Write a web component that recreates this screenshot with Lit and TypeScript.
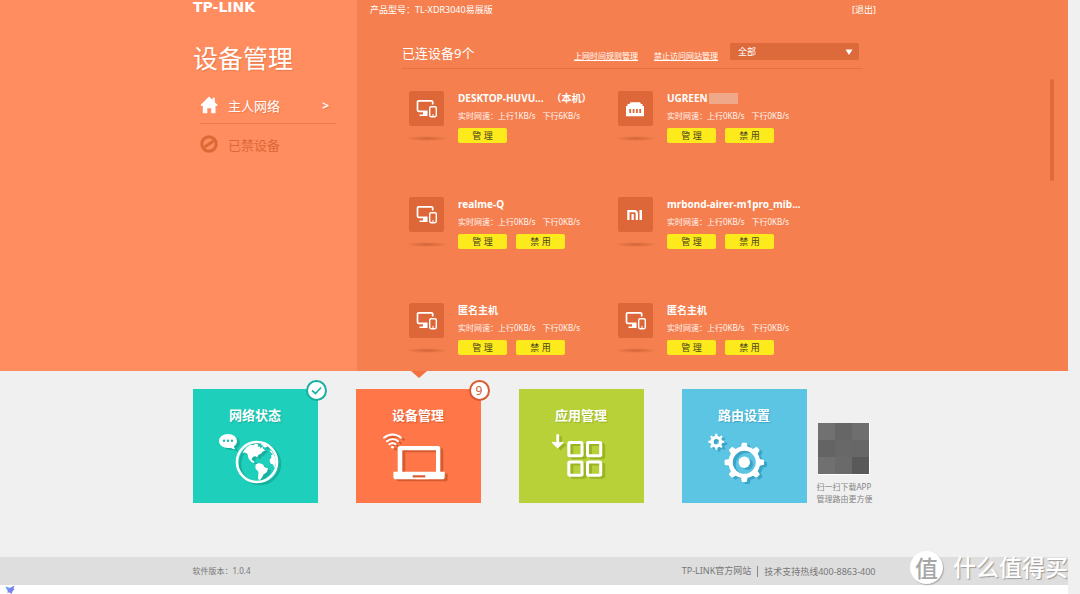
import { LitElement, html, svg, css, type TemplateResult } from "lit";
import { customElement, property } from "lit/decorators.js";

type Kind = "multi" | "ethernet" | "mi";

interface Device {
  name: string;
  kind: Kind;
  up: string;
  down: string;
  self?: boolean;
  masked?: boolean;
}

const devices: Device[] = [
  { name: "DESKTOP-HUVU...", kind: "multi", up: "1KB/s", down: "6KB/s", self: true },
  { name: "UGREEN", kind: "ethernet", up: "0KB/s", down: "0KB/s", masked: true },
  { name: "realme-Q", kind: "multi", up: "0KB/s", down: "0KB/s" },
  { name: "mrbond-airer-m1pro_mib...", kind: "mi", up: "0KB/s", down: "0KB/s" },
  { name: "匿名主机", kind: "multi", up: "0KB/s", down: "0KB/s" },
  { name: "匿名主机", kind: "multi", up: "0KB/s", down: "0KB/s" },
];

/** Outline of a toothed wheel around (cx, cy). */
function gear(cx: number, cy: number, outer: number, root: number, teeth: number): string {
  const step = (Math.PI * 2) / teeth;
  const pts: string[] = [];
  const at = (r: number, a: number) =>
    pts.push(`${(cx + r * Math.sin(a)).toFixed(2)} ${(cy - r * Math.cos(a)).toFixed(2)}`);
  for (let i = 0; i < teeth; i++) {
    const a = i * step;
    at(root, a - step * 0.27);
    at(outer, a - step * 0.15);
    at(outer, a + step * 0.15);
    at(root, a + step * 0.27);
    at(root, a + step * 0.5);
  }
  return `M${pts.join("L")}Z`;
}

/** Full circle as a subpath, used to punch a hole. */
function hole(cx: number, cy: number, r: number): string {
  return `M${cx - r} ${cy}a${r} ${r} 0 1 0 ${2 * r} 0a${r} ${r} 0 1 0 ${-2 * r} 0Z`;
}

const deviceGlyphs: Record<Kind, TemplateResult> = {
  multi: svg`
    <path d="M18.500 20.300H9.700a1.200 1.200 0 0 1-1.200-1.200V11a1.200 1.200 0 0 1 1.200-1.200h12.800A1.200 1.200 0 0 1 23.700 11v2.500" fill="none" stroke="#fff" stroke-width="1.700"/>
    <path d="M14 21h4.500v4H10.500v-1.600H14Z" fill="#fff"/>
    <rect x="20.700" y="15.700" width="6.600" height="10" rx="1.400" fill="none" stroke="#fff" stroke-width="1.400"/>
    <path d="M23 24h2" stroke="#fff" stroke-width="1"/>`,
  ethernet: svg`
    <path fill="#fff" fill-rule="evenodd" d="M12.500 11.300h9.500l1 1.700h1.500v2H26v10.300H8V15h1.500v-2h2ZM11.300 18v4h1.800v-4ZM14.700 18v4h1.800v-4ZM18 18v4h1.800v-4ZM21.300 18v4h1.800v-4Z"/>`,
  mi: svg`
    <path d="M10.400 23V14.200h6.200a2.200 2.200 0 0 1 2.200 2.200V23" fill="none" stroke="#fff" stroke-width="2.300"/>
    <path d="M13.500 17h2.300v6h-2.300ZM21.500 13h2.500v10h-2.500Z" fill="#fff"/>`,
};

@customElement("device-card")
export class DeviceCard extends LitElement {
  @property({ attribute: false }) device!: Device;

  static styles = css`
    :host {
      display: flex;
      gap: 14px;
      color: #fff;
    }
    .icon {
      display: flex;
      flex-direction: column;
      align-items: center;
      gap: 10px;
      width: 35px;
    }
    .box {
      width: 35px;
      height: 35px;
      border-radius: 2px;
      background: #de6739;
      display: block;
    }
    .shade {
      width: 42px;
      height: 5px;
      margin: 0 -4px;
      background: radial-gradient(closest-side, #cf6436, #f57f4e00);
    }
    .name {
      display: flex;
      align-items: center;
      font-size: 10px;
      line-height: 14px;
      font-weight: 700;
      white-space: nowrap;
    }
    .mask {
      width: 29px;
      height: 11px;
      background: #f0a88b;
      margin-left: 1px;
    }
    .self {
      margin-left: 8px;
    }
    .speed {
      display: flex;
      gap: 7px;
      margin-top: 5px;
      font-size: 8px;
      line-height: 12px;
      white-space: nowrap;
      color: #fff6f2;
    }
    .actions {
      display: flex;
      gap: 9px;
      margin-top: 6px;
    }
    button {
      width: 49px;
      height: 15px;
      padding: 0;
      border: 0;
      border-radius: 2px;
      background: #fcea1d;
      color: #4b4220;
      font: inherit;
      font-size: 9px;
      line-height: 15px;
      cursor: pointer;
    }
  `;

  render() {
    const d = this.device;
    return html`
      <div class="icon">
        <svg class="box" viewBox="0 0 35 35" aria-hidden="true">${deviceGlyphs[d.kind]}</svg>
        <div class="shade"></div>
      </div>
      <div>
        <div class="name">
          <span>${d.name}</span>
          ${d.masked ? html`<span class="mask"></span>` : ""}
          ${d.self ? html`<span class="self">（本机）</span>` : ""}
        </div>
        <div class="speed"><span>实时网速：上行${d.up}</span><span>下行${d.down}</span></div>
        <div class="actions">
          <button type="button">管 理</button>
          ${d.self ? "" : html`<button type="button">禁 用</button>`}
        </div>
      </div>
    `;
  }
}

interface Tile {
  title: string;
  tone: string;
  art: TemplateResult;
  badge?: TemplateResult;
  active?: boolean;
}

const tiles: Tile[] = [
  {
    title: "网络状态",
    tone: "teal",
    badge: html`<svg width="13" height="11" viewBox="0 0 13 11" aria-hidden="true">
      <path d="M2 5.500 5.500 8.500 11 2.500" fill="none" stroke="#1fb5a4" stroke-width="1.800" />
    </svg>`,
    art: svg`
      <path d="M35 5c5 0 9 3 9 7 0 2.200-1.200 3.900-3 5.200.1 1.300.6 2.200 1.500 3-2.200-.1-3.900-.7-5-1.500-.8.200-1.600.3-2.500.3-5 0-9-3-9-7s4-7 9-7Z" fill="#fff"/>
      <g fill="#1bb9a7"><circle cx="31" cy="11.700" r="1.200"/><circle cx="35" cy="11.700" r="1.200"/><circle cx="39" cy="11.700" r="1.200"/></g>
      <circle cx="64" cy="33" r="20" fill="none" stroke="#fff" stroke-width="2.600"/>
      <path fill="#fff" d="M49.500 24c2-4 5-7 8.500-8.500l2 .8 2.500-1.500 3 .8-1 2 3 .2-.5 2 2.500-2 1 2.500 2 1-3 1.500-1.500 2-2.500 1-1.500 3-1-1.500-3 .5-1.500 3 2.200 1.200.8 2.300-3-1.300-3-3.500-1-4.500-2.500-1.500Z"/>
      <path fill="#fff" d="M62.500 35.500 66 34l4 1.500 1.500 2.500 3.500 1.500-1 3.500-3.500 2.500-1.500 3-2.500 3-1.500-2 .5-6.500-3-3.500Z"/>
      <path fill="#fff" d="M75.500 19c4 3.500 7 8 7.500 14l-1.500 6-1.500-3.500-2.500-1-1-3.500 2-2.500-.5-2 2-1-3-3 .5-1.500Z"/>
      <path fill="#fff" d="M67 14.500 72 15l2.500 3-3 .5Z"/>`,
  },
  {
    title: "设备管理",
    tone: "orange",
    active: true,
    badge: html`<span>9</span>`,
    art: svg`
      <g fill="none" stroke="#fff" stroke-width="1.900" stroke-linecap="round">
        <path d="M28 8.800a12.500 12.500 0 0 1 17 0"/><path d="M30.900 12.300a8.400 8.400 0 0 1 11.200 0"/><path d="M33.500 15.300a4.500 4.500 0 0 1 6 0"/>
      </g>
      <circle cx="36.500" cy="18.200" r="1.400" fill="#fff"/>
      <path fill="#fff" fill-rule="evenodd" d="M44 17h38a2.300 2.300 0 0 1 2.300 2.300V42.700h4.400v5a2.600 2.600 0 0 1-2.600 2.600H40a2.600 2.600 0 0 1-2.600-2.600v-5h4.300V19.300A2.300 2.300 0 0 1 44 17ZM46.300 21.300V42.700H80V21.300ZM56.700 46.300v2.200h12.600v-2.200Z"/>`,
  },
  {
    title: "应用管理",
    tone: "green",
    art: svg`
      <g fill="none" stroke="#fff" stroke-width="3">
        <rect x="49.800" y="13.500" width="13.200" height="13.200" rx="1.200"/><rect x="68.500" y="13.500" width="13.200" height="13.200" rx="1.200"/>
        <rect x="49.800" y="33" width="13.200" height="13.200" rx="1.200"/><rect x="68.500" y="33" width="13.200" height="13.200" rx="1.200"/>
      </g>
      <path fill="#fff" d="M37.300 5.300h2.800v7.900l4.200-.5v1.300l-5.600 5.500L33 14v-1.300l4.300.5Z"/>`,
  },
  {
    title: "路由设置",
    tone: "blue",
    art: svg`
      <path fill="#fff" fill-rule="evenodd" d="${gear(34.3, 12.7, 8, 5.900, 8) + hole(34.3, 12.7, 2.6)}"/>
      <path fill="#fff" fill-rule="evenodd" d="${gear(62.3, 33.3, 19.8, 15.900, 8) + hole(62.3, 33.3, 11.5)}"/>
      <circle cx="62.300" cy="33.300" r="5.700" fill="#fff"/>`,
  },
];

const qrShades = ["#717171", "#666", "#6e6e6e", "#646464", "#686868", "#676767", "#707070", "#6a6a6a", "#595959"];

@customElement("app-root")
export class AppRoot extends LitElement {
  static styles = css`
    :host {
      display: block;
      padding-right: 12px;
      background: #f0f0f0;
      font-family: "Noto Sans", "Noto Sans CJK SC", sans-serif;
      color: #fff;
    }
    a {
      color: inherit;
      text-decoration: none;
    }
    h1,
    h2,
    h3,
    ul,
    p {
      margin: 0;
      padding: 0;
      font-weight: 400;
    }
    ul {
      list-style: none;
    }

    .top {
      display: grid;
      grid-template-columns: calc(50% - 177px) 1fr;
    }
    .side {
      display: flex;
      justify-content: flex-end;
      background: #ff8d5f;
    }
    .side-inner {
      width: 164px;
    }
    .logo {
      display: block;
      font: 700 14px/14px "DejaVu Sans", sans-serif;
    }
    h1 {
      margin-top: 26px;
      font-size: 25px;
      line-height: 36px;
      text-shadow: 1px 1px 1px #d9703f99;
    }
    .menu {
      width: 136px;
      margin: 11px 0 0 7px;
    }
    .menu a {
      display: flex;
      align-items: center;
      gap: 10px;
      height: 36px;
      font-size: 13px;
    }
    .menu li + li {
      margin-top: 2px;
    }
    .menu .current {
      border-bottom: 1px solid #ee7a4b;
      text-shadow: 1px 1px 1px #d9703f99;
    }
    .menu .chev {
      margin-left: auto;
      padding-right: 7px;
      font-size: 12px;
      font-weight: 700;
    }
    .menu .muted {
      color: #dc6838;
    }

    .main {
      display: flex;
      justify-content: space-between;
      background: #f57f4e;
      padding: 0 14px 0 13px;
    }
    .content {
      width: 506px;
    }
    .bar {
      display: flex;
      justify-content: space-between;
      font-size: 9px;
      line-height: 13px;
      padding-top: 3px;
    }
    .panel {
      padding: 0 13px 0 32px;
    }
    .head {
      display: flex;
      align-items: flex-start;
      height: 25px;
      margin: 27px 0 22px;
      padding-right: 4px;
      border-bottom: 1px solid #e57043;
    }
    h2 {
      font-size: 13px;
      line-height: 20px;
      margin-right: auto;
    }
    .links {
      display: flex;
      gap: 16px;
      margin-right: 12px;
      padding-top: 7px;
      font-size: 8px;
      line-height: 12px;
    }
    .links a {
      text-decoration: underline;
    }
    .filter {
      display: flex;
      align-items: center;
      width: 129px;
      height: 17px;
      border-radius: 2px;
      background: #dd6a3b;
      padding-right: 6px;
      box-sizing: border-box;
    }
    select {
      appearance: none;
      flex: 1;
      height: 17px;
      padding: 0 0 0 8px;
      border: 0;
      background: none;
      color: #fff;
      font: inherit;
      font-size: 9px;
    }
    .devices {
      display: grid;
      grid-template-columns: 209px 209px;
      row-gap: 53px;
      padding: 0 0 15px 7px;
    }
    .devices li {
      height: 53px;
    }
    .thumb {
      width: 4px;
      height: 102px;
      margin-top: 79px;
      border-radius: 2px;
      background: #e26b3e;
    }

    .wrap {
      display: flex;
      width: 683px;
      margin: 0 auto;
    }
    .nav {
      display: flex;
      gap: 38px;
    }
    .dock {
      padding: 18px 0 52px;
    }
    .tile {
      position: relative;
      display: block;
      width: 125px;
      height: 114px;
    }
    .teal {
      background: #1ecfbb;
      --shade: #17b09f;
    }
    .orange {
      background: #ff7648;
      --shade: #d85b30;
    }
    .green {
      background: #b8d138;
      --shade: #99b524;
    }
    .blue {
      background: #5dc5e4;
      --shade: #3aa5c8;
    }
    .tile h3 {
      padding-top: 16px;
      height: 24px;
      font-size: 13px;
      line-height: 20px;
      font-weight: 700;
      text-align: center;
      text-shadow: 1px 1px 1px var(--shade);
    }
    .art {
      display: block;
      width: 125px;
      height: 70px;
      filter: drop-shadow(3px 2px 0 var(--shade));
    }
    .arrow {
      position: absolute;
      top: -18px;
      left: 55px;
      border: 8px solid transparent;
      border-top: 7px solid #f5703f;
      border-bottom: 0;
    }
    .badge {
      position: absolute;
      top: -9px;
      right: -9px;
      box-sizing: border-box;
      width: 21px;
      height: 21px;
      border: 2px solid var(--shade);
      border-radius: 50%;
      background: #fff;
      color: #d0602f;
      display: flex;
      align-items: center;
      justify-content: center;
      font-size: 12px;
      line-height: 17px;
    }
    .app {
      width: 59px;
      margin: 34px 0 0 auto;
      font-size: 8px;
      line-height: 12px;
      color: #868686;
      white-space: nowrap;
    }
    .qr {
      display: grid;
      grid-template-columns: repeat(3, 1fr);
      width: 51px;
      height: 51px;
      margin: 0 0 6px 1px;
      border: 1px solid #fff;
      border-left: 0;
      border-top: 0;
    }

    .footer {
      background: #dedede;
      color: #777;
      font-size: 9px;
      line-height: 28px;
    }
    .footer .wrap {
      align-items: center;
    }
    .footer .version {
      font-size: 8px;
    }
    .footer .site {
      margin-left: auto;
      padding-right: 6px;
    }
    .footer .hotline {
      border-left: 1px solid #888;
      padding-left: 6px;
      line-height: 11px;
    }
    .strip {
      background: #fff;
      height: 9px;
      padding-left: 5px;
    }
    .strip svg {
      display: block;
    }
    .mark {
      position: absolute;
      right: 12px;
      top: 550px;
      display: flex;
      align-items: center;
      gap: 10px;
      font-size: 23px;
      line-height: 34px;
      font-weight: 500;
      text-shadow: 1px 1px 1px #999;
    }
    .mark b {
      width: 33px;
      height: 33px;
      border-radius: 50%;
      background: #fff;
      box-shadow: 1px 1px 1px #aaa;
      color: #a6a6a6;
      font-weight: 500;
      text-align: center;
      text-shadow: none;
    }
  `;

  render() {
    return html`
      <section class="top">
        <aside class="side">
          <div class="side-inner">
            <a class="logo" href="#">TP-LINK</a>
            <h1>设备管理</h1>
            <ul class="menu">
              <li class="current">
                <a href="#">
                  <svg width="18" height="18" viewBox="0 0 18 18" aria-hidden="true">
                    <path fill="#fff" d="M9 .5 12.500 4V1.800h2.300v4.500L17.700 9l-.8 1-1.400-.2v7.400h-4.300v-5H7.300v5H2.800V9.800L1.300 10 .5 9Z" />
                  </svg>
                  主人网络<span class="chev">&gt;</span>
                </a>
              </li>
              <li>
                <a class="muted" href="#">
                  <svg width="18" height="18" viewBox="0 0 18 18" aria-hidden="true">
                    <circle cx="9" cy="9" r="7.200" fill="none" stroke="#dc6838" stroke-width="3" />
                    <path d="M4.500 12 13.500 6" stroke="#dc6838" stroke-width="3" />
                  </svg>
                  已禁设备
                </a>
              </li>
            </ul>
          </div>
        </aside>
        <main class="main">
          <div class="content">
            <div class="bar"><span>产品型号：TL-XDR3040易展版</span><a href="#">[退出]</a></div>
            <div class="panel">
              <div class="head">
                <h2>已连设备9个</h2>
                <div class="links"><a href="#">上网时间规则管理</a><a href="#">禁止访问网站管理</a></div>
                <div class="filter">
                  <select aria-label="设备筛选">
                    <option>全部</option>
                  </select>
                  <svg width="8" height="6" viewBox="0 0 8 6" aria-hidden="true"><path d="M.5.500h7L4 6Z" fill="#fff" /></svg>
                </div>
              </div>
              <ul class="devices">
                ${devices.map((d) => html`<li><device-card .device=${d}></device-card></li>`)}
              </ul>
            </div>
          </div>
          <div class="thumb"></div>
        </main>
      </section>

      <div class="wrap dock">
        <nav class="nav">
          ${tiles.map(
            (t) => html`<a class="tile ${t.tone}" href="#">
              <h3>${t.title}</h3>
              <svg class="art" viewBox="0 0 125 70" aria-hidden="true">${t.art}</svg>
              ${t.active ? html`<span class="arrow"></span>` : ""}
              ${t.badge ? html`<span class="badge">${t.badge}</span>` : ""}
            </a>`
          )}
        </nav>
        <div class="app">
          <div class="qr">${qrShades.map((c) => html`<i style="background:${c}"></i>`)}</div>
          <p>扫一扫下载APP</p>
          <p>管理路由更方便</p>
        </div>
      </div>

      <footer class="footer">
        <div class="wrap">
          <span class="version">软件版本：1.0.4</span>
          <a class="site" href="#">TP-LINK官方网站</a>
          <span class="hotline">技术支持热线400-8863-400</span>
        </div>
      </footer>
      <div class="strip">
        <svg width="10" height="9" viewBox="0 0 10 9" aria-hidden="true">
          <path d="M.5 1.500 4.500 3 9.500.5 8.500 3.500 9.500 4 7.500 6.500 6.500 9 4.500 7.500 2 7.500 3 6Z" fill="#7b84ee" />
          <path d="M.5 1.500 4.500 3 3 6Z" fill="#58a6f2" />
        </svg>
      </div>
      <div class="mark"><b>值</b><span>什么值得买</span></div>
    `;
  }
}
